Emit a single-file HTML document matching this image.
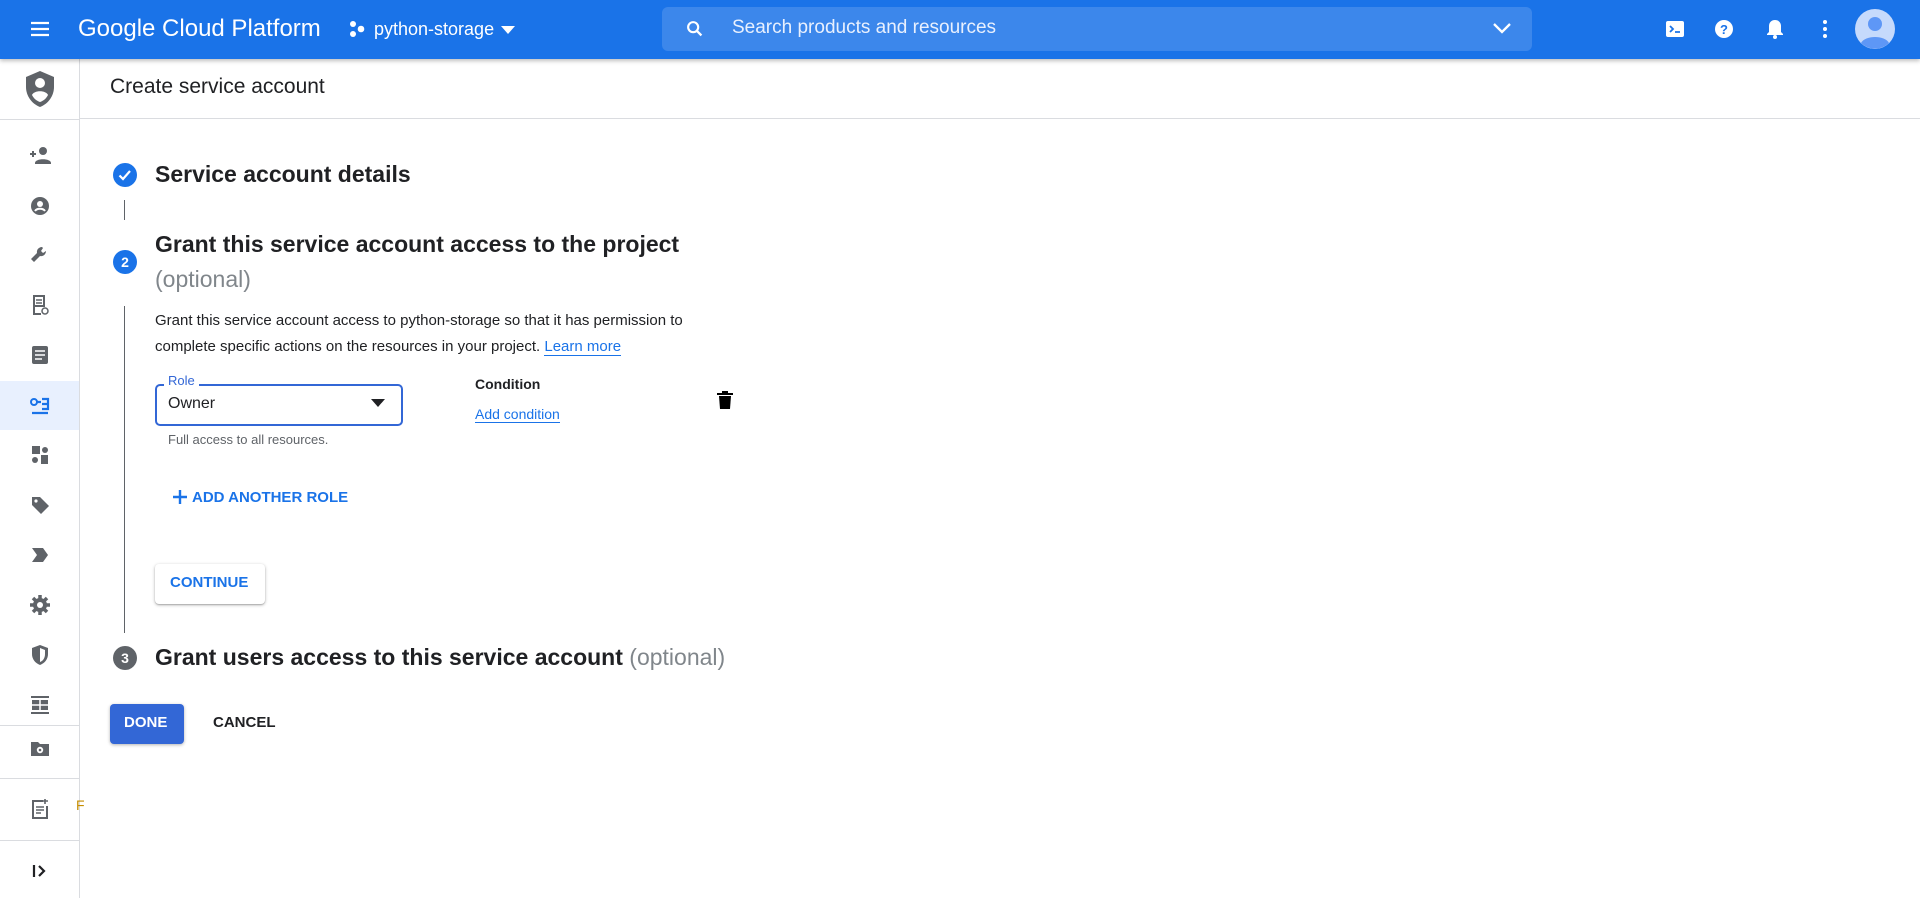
<!DOCTYPE html>
<html><head><meta charset="utf-8"><style>
*{margin:0;padding:0;box-sizing:border-box}
body{width:1920px;height:898px;overflow:hidden;background:#fff;font-family:"Liberation Sans",sans-serif;color:#202124;position:relative}
.abs{position:absolute}
#top{position:absolute;left:0;top:0;width:1920px;height:59px;background:#1a73e8;box-shadow:0 2px 4px rgba(0,0,0,.25);z-index:2}
#side{position:absolute;left:0;top:59px;width:80px;height:839px;border-right:1px solid #dadce0;background:#fff}
.si{position:absolute;left:28px;width:24px;height:24px}
.hr{position:absolute;left:0;width:80px;height:1px;background:#dadce0}
.t{position:absolute;white-space:nowrap}
.circ{position:absolute;width:24px;height:24px;border-radius:50%;color:#fff;font-size:14px;font-weight:bold;text-align:center;line-height:24px}
</style></head><body>
<div id="top">
 <svg class="abs" style="left:28px;top:17px" width="24" height="24" viewBox="0 0 24 24"><path d="M3 6h18M3 12h18M3 18h18" stroke="#fff" stroke-width="2.2"/></svg>
 <div class="t" style="left:78px;top:15px;color:#fff;font-size:24px">Google Cloud Platform</div>
 <svg class="abs" style="left:348px;top:20px" width="18" height="18" viewBox="0 0 18 18"><circle cx="5" cy="4" r="3" fill="#fff"/><circle cx="5" cy="14" r="3" fill="#fff"/><circle cx="13" cy="9" r="3.3" fill="#fff"/></svg>
 <div class="t" style="left:374px;top:19px;color:#fff;font-size:18px">python-storage</div>
 <svg class="abs" style="left:500px;top:25px" width="16" height="10"><path d="M1 1h14L8 9z" fill="#fff"/></svg>
 <div class="abs" style="left:662px;top:7px;width:870px;height:44px;border-radius:6px;background:rgba(255,255,255,.15)"></div>
 <svg class="abs" style="left:684px;top:18px" width="22" height="22" viewBox="0 0 24 24"><circle cx="10" cy="10" r="5.5" stroke="#fff" stroke-width="2.3" fill="none"/><path d="M14 14l5 5" stroke="#fff" stroke-width="2.5"/></svg>
 <div class="t" style="left:732px;top:17px;color:#e8f0fe;font-size:19px">Search products and resources</div>
 <svg class="abs" style="left:1492px;top:22px" width="20" height="14"><path d="M2 2l8 8 8-8" stroke="#fff" stroke-width="2.3" fill="none"/></svg>
 <svg class="abs" style="left:1665px;top:19px" width="20" height="20" viewBox="0 0 20 20"><rect x="1" y="2" width="18" height="16" rx="2" fill="#fff"/><path d="M5 7l3 3-3 3M10 13h5" stroke="#1a73e8" stroke-width="1.8" fill="none"/></svg>
 <svg class="abs" style="left:1714px;top:19px" width="20" height="20" viewBox="0 0 20 20"><circle cx="10" cy="10" r="9" fill="#fff"/><text x="10" y="15" font-size="13" font-weight="bold" fill="#1a73e8" text-anchor="middle" font-family="Liberation Sans">?</text></svg>
 <svg class="abs" style="left:1765px;top:18px" width="20" height="22" viewBox="0 0 20 22"><path d="M10 2c-4 0-6 3-6 6v6l-2 2v1h16v-1l-2-2V8c0-3-2-6-6-6z" fill="#fff"/><circle cx="10" cy="19" r="2" fill="#fff"/></svg>
 <svg class="abs" style="left:1815px;top:18px" width="20" height="22"><circle cx="10" cy="4" r="2" fill="#fff"/><circle cx="10" cy="11" r="2" fill="#fff"/><circle cx="10" cy="18" r="2" fill="#fff"/></svg>
 <svg class="abs" style="left:1855px;top:9px" width="40" height="40" viewBox="0 0 40 40"><circle cx="20" cy="20" r="20" fill="#c6dafc"/><circle cx="20" cy="15" r="7" fill="#5e97f6"/><path d="M6 34c4-8 24-8 28 0a20 20 0 0 1-28 0z" fill="#5e97f6"/></svg>
</div>

<div id="side">
 <svg class="abs" style="left:24px;top:11px" width="32" height="38" viewBox="0 0 32 38"><path d="M16 1L2 7v10c0 9 6 17 14 20 8-3 14-11 14-20V7z" fill="#5f6368"/><circle cx="16" cy="13" r="5" fill="#fff"/><path d="M8 25c2-5 14-5 16 0-2 4-5 6-8 7-3-1-6-3-8-7z" fill="#fff"/></svg>
 <div class="hr" style="top:60px"></div>
 <svg class="si" style="top:84px" viewBox="0 0 24 24"><circle cx="15" cy="8" r="4" fill="#5f6368"/><path d="M7 20c0-5 16-5 16 0v1H7z" fill="#5f6368"/><path d="M2 11h6M5 8v6" stroke="#5f6368" stroke-width="2"/></svg>
 <svg class="si" style="top:135px" viewBox="0 0 24 24"><circle cx="12" cy="12" r="9" fill="#5f6368"/><circle cx="12" cy="10" r="3" fill="#fff"/><path d="M7 17c2-3 8-3 10 0" stroke="#fff" stroke-width="2" fill="none"/></svg>
 <svg class="si" style="top:185px" viewBox="0 0 24 24"><path d="M14 3a5 5 0 0 0-5 6L3 15l3 3 6-6a5 5 0 0 0 6-5l-3 2-2-2 2-3z" fill="#5f6368"/></svg>
 <svg class="si" style="top:234px" viewBox="0 0 24 24"><path d="M6 3h10v10H6zM6 13v8h7" fill="none" stroke="#5f6368" stroke-width="2"/><path d="M8 7h6M8 10h6M8 13h4" stroke="#5f6368" stroke-width="1.5"/><circle cx="17" cy="18" r="3" fill="none" stroke="#5f6368" stroke-width="1.5"/></svg>
 <svg class="si" style="top:284px" viewBox="0 0 24 24"><rect x="4" y="3" width="16" height="18" rx="2" fill="#5f6368"/><path d="M7 8h10M7 12h10M7 16h7" stroke="#fff" stroke-width="1.6"/></svg>
 <div class="abs" style="left:0;top:322px;width:79px;height:49px;background:#e8f0fe"></div>
 <svg class="si" style="top:335px" viewBox="0 0 24 24"><circle cx="6" cy="8" r="3" fill="none" stroke="#1a73e8" stroke-width="2"/><path d="M9 8h4M14 5h6v10H14M14 10h5M4 19h16" stroke="#1a73e8" stroke-width="2.2" fill="none"/></svg>
 <svg class="si" style="top:384px" viewBox="0 0 24 24"><rect x="4" y="3" width="8" height="8" fill="#5f6368"/><circle cx="17" cy="7" r="3" fill="#5f6368"/><circle cx="7" cy="17" r="3" fill="#5f6368"/><rect x="13" y="12" width="7" height="9" fill="#5f6368"/></svg>
 <svg class="si" style="top:434px" viewBox="0 0 24 24"><path d="M4 4h8l9 9-8 8-9-9z" fill="#5f6368"/><circle cx="8" cy="8" r="1.6" fill="#fff"/></svg>
 <svg class="si" style="top:484px" viewBox="0 0 24 24"><path d="M4 5h11l5 7-5 7H4l5-7z" fill="#5f6368"/></svg>
 <svg class="si" style="top:534px" viewBox="0 0 24 24"><circle cx="12" cy="12" r="7" fill="#5f6368"/><path d="M12 2v20M2 12h20M5 5l14 14M19 5L5 19" stroke="#5f6368" stroke-width="3.5"/><circle cx="12" cy="12" r="3" fill="#fff"/></svg>
 <svg class="si" style="top:584px" viewBox="0 0 24 24"><path d="M12 2L4 5v6c0 5 3 9 8 11 5-2 8-6 8-11V5z" fill="#5f6368"/><path d="M12 5v14c3-1 5-4 5-8V7z" fill="#fff"/></svg>
 <svg class="si" style="top:634px" viewBox="0 0 24 24"><path d="M3 4h18M3 20h18" stroke="#5f6368" stroke-width="2"/><rect x="4" y="7" width="16" height="10" fill="#5f6368"/><path d="M4 12h16M12 7v10" stroke="#fff" stroke-width="1.5"/></svg>
 <div class="hr" style="top:666px"></div>
 <svg class="si" style="top:677px" viewBox="0 0 24 24"><path d="M3 6h7l2 2h9v12H3z" fill="#5f6368"/><circle cx="12" cy="14" r="3.2" fill="#fff"/><circle cx="12" cy="14" r="1.3" fill="#5f6368"/></svg>
 <div class="hr" style="top:719px"></div>
 <svg class="si" style="top:738px" viewBox="0 0 24 24"><path d="M15 4H5v17h14V9" fill="none" stroke="#5f6368" stroke-width="2"/><path d="M8 10h8M8 13h8M8 16h5M17 2v5M15 4h5" stroke="#5f6368" stroke-width="1.6"/></svg>
 <div class="t" style="left:76px;top:738px;font-size:14px;color:#c58d00">F</div>
 <div class="hr" style="top:781px"></div>
 <svg class="si" style="top:800px" viewBox="0 0 24 24"><path d="M6 6v12M11 7l5 5-5 5" stroke="#202124" stroke-width="2.2" fill="none"/></svg>
</div>

<div class="abs" style="left:80px;top:118px;width:1840px;height:1px;background:#dadce0"></div>
<div class="t" style="left:110px;top:75px;font-size:21px">Create service account</div>

<div class="circ" style="left:113px;top:163px;background:#1a73e8"><svg width="24" height="24" viewBox="0 0 24 24"><path d="M6.5 12.5l3.5 3.5 7-8" stroke="#fff" stroke-width="2.2" fill="none"/></svg></div>
<div class="t" style="left:155px;top:161px;font-size:23px;font-weight:bold">Service account details</div>
<div class="abs" style="left:124px;top:200px;width:1px;height:20px;background:#5f6368"></div>

<div class="circ" style="left:113px;top:250px;background:#1a73e8">2</div>
<div class="t" style="left:155px;top:231px;font-size:23px;font-weight:bold">Grant this service account access to the project</div>
<div class="t" style="left:155px;top:266px;font-size:23px;color:#80868b">(optional)</div>
<div class="abs" style="left:124px;top:306px;width:1px;height:327px;background:#5f6368"></div>

<div class="t" style="left:155px;top:308px;font-size:15px;line-height:26px;color:#202124">Grant this service account access to python-storage so that it has permission to<br>complete specific actions on the resources in your project. <span style="color:#1a73e8;border-bottom:1px solid #1a73e8">Learn more</span></div>

<div class="abs" style="left:155px;top:384px;width:248px;height:42px;border:2px solid #3367d6;border-radius:5px"></div>
<div class="t" style="left:164px;top:373px;font-size:13px;color:#3367d6;background:#fff;padding:0 4px">Role</div>
<div class="t" style="left:168px;top:395px;font-size:16px">Owner</div>
<svg class="abs" style="left:371px;top:399px" width="14" height="8"><path d="M0 0h14L7 8z" fill="#202124"/></svg>
<div class="t" style="left:168px;top:432px;font-size:13px;color:#5f6368">Full access to all resources.</div>

<div class="t" style="left:475px;top:376px;font-size:14px;font-weight:bold">Condition</div>
<div class="t" style="left:475px;top:406px;font-size:14px;color:#1a73e8;border-bottom:1px solid #1a73e8">Add condition</div>
<svg class="abs" style="left:716px;top:390px" width="18" height="20" viewBox="0 0 18 20"><path d="M6 1h6v2h5v2H1V3h5z" fill="#000"/><path d="M3 6h12l-1 13H4z" fill="#000"/></svg>

<svg class="abs" style="left:171px;top:488px" width="18" height="18"><path d="M9 2v14M2 9h14" stroke="#1a73e8" stroke-width="2.4"/></svg>
<div class="t" style="left:192px;top:489px;font-size:15px;font-weight:bold;color:#1a73e8">ADD ANOTHER ROLE</div>

<div class="abs" style="left:155px;top:564px;width:110px;height:40px;border-radius:4px;background:#fff;box-shadow:0 1px 3px rgba(0,0,0,.3),0 1px 1px rgba(0,0,0,.14)"></div>
<div class="t" style="left:170px;top:574px;font-size:15px;font-weight:bold;color:#1a73e8">CONTINUE</div>

<div class="circ" style="left:113px;top:646px;background:#5f6368">3</div>
<div class="t" style="left:155px;top:644px;font-size:23px;font-weight:bold">Grant users access to this service account <span style="font-weight:normal;color:#80868b">(optional)</span></div>

<div class="abs" style="left:110px;top:704px;width:74px;height:40px;border-radius:4px;background:#3367d6;box-shadow:0 1px 3px rgba(0,0,0,.3)"></div>
<div class="t" style="left:124px;top:714px;font-size:15px;font-weight:bold;color:#fff">DONE</div>
<div class="t" style="left:213px;top:714px;font-size:15px;font-weight:bold;color:#202124">CANCEL</div>
</body></html>
